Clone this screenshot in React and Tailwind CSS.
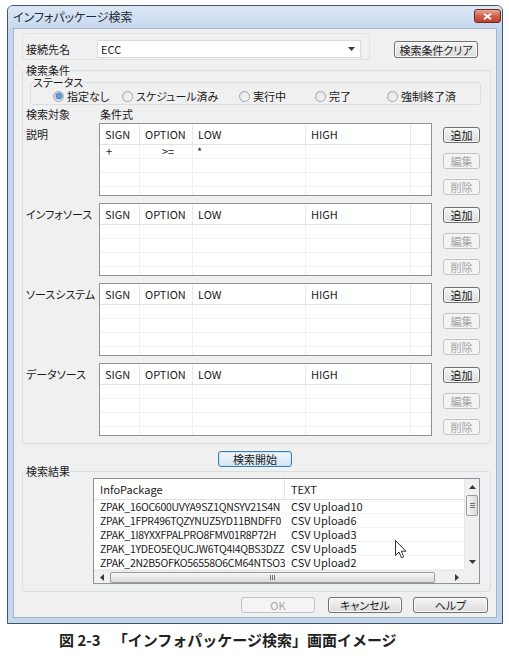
import React from "react";

const UI = "font-['Noto_Sans_CJK_JP','Liberation_Sans',sans-serif] [font-feature-settings:'palt']";

function Btn({ children, w = "w-[37px]", h = "h-[16px]", disabled, focus, className = "" }) {
  let style;
  if (disabled) style = "border-[#c0c4c7] bg-[#f4f4f4] text-[#a6a6a6]";
  else if (focus)
    style =
      "border-[#3c7fb1] bg-linear-to-b from-[#f1f7fc] to-[#d3e4f2] shadow-[inset_0_0_0_1px_#c6e6f8] text-[#1a1a1a]";
  else
    style =
      "border-[#707070] bg-linear-to-b from-[#f5f5f5] to-[#dcdcdc] shadow-[inset_0_0_0_1px_#fbfbfb] text-[#1a1a1a]";
  return (
    <div
      className={`${w} ${h} ${style} ${className} shrink-0 flex items-center justify-center rounded-[3px] border leading-[12px]`}
    >
      {children}
    </div>
  );
}

function Radio({ checked }) {
  return (
    <span className="w-[11px] h-[11px] rounded-full border border-[#a2a2a2] bg-linear-to-br from-[#e2e2e2] to-[#fbfbfb] flex items-center justify-center shrink-0">
      {checked && (
        <span className="w-[6px] h-[6px] rounded-full bg-radial from-[#7fb6ec] to-[#1c5ea8] shadow-[0_0_0_1px_#9cc3e8]" />
      )}
    </span>
  );
}

const COLS = ["w-[40px]", "w-[53px]", "w-[113px]", "w-[105px]", "flex-1"];
const HEAD = ["SIGN", "OPTION", "LOW", "HIGH", ""];

function CondTable({ label, first, rows = [] }) {
  const allRows = [0, 1, 2, 3].map((i) => rows[i] || null);
  return (
    <div className={`flex ${first ? "mt-[2px]" : "mt-[7px]"}`}>
      <div className="w-[76px] pl-[3px] pt-[4px] leading-[14px]">{label}</div>
      <div className="w-[333px] h-[73px] border border-[#8d9199] bg-white flex flex-col overflow-hidden">
        <div className="flex h-[21px] shrink-0 border-b border-[#e3e3e3]">
          {HEAD.map((h, i) => (
            <div
              key={i}
              className={`${COLS[i]} shrink-0 flex items-center pl-[5px] leading-[14px] ${
                i < 4 ? "border-r border-[#e8e8e8]" : ""
              }`}
            >
              {h}
            </div>
          ))}
        </div>
        {allRows.map((r, ri) => (
          <div key={ri} className="flex h-[14px] shrink-0 border-b border-[#f1f1f1]">
            {COLS.map((c, ci) => (
              <div
                key={ci}
                className={`${c} shrink-0 flex items-center leading-[13px] ${
                  ci < 4 ? "border-r border-[#f1f1f1]" : ""
                } ${ci === 0 ? "pl-[6px]" : ci === 1 ? "pl-[22px]" : "pl-[4px]"}`}
              >
                {r ? r[ci] : ""}
              </div>
            ))}
          </div>
        ))}
      </div>
      <div className="ml-[11px] flex flex-col pt-[4px] gap-[10px]">
        <Btn>追加</Btn>
        <Btn disabled>編集</Btn>
        <Btn disabled>削除</Btn>
      </div>
    </div>
  );
}

function Tri({ dir }) {
  const pts = {
    up: "0,4 7,4 3.5,0",
    down: "0,0 7,0 3.5,4",
    left: "4,0 4,7 0,3.5",
    right: "0,0 0,7 4,3.5",
  }[dir];
  const wh = dir === "up" || dir === "down" ? [7, 4] : [4, 7];
  return (
    <svg width={wh[0]} height={wh[1]} viewBox={`0 0 ${wh[0]} ${wh[1]}`}>
      <polygon points={pts} fill="#3a3a3a" />
    </svg>
  );
}

const RESULTS = [
  ["ZPAK_16OC600UVYA9SZ1QNSYV21S4N", "CSV Upload10"],
  ["ZPAK_1FPR496TQZYNUZ5YD11BNDFF0", "CSV Upload6"],
  ["ZPAK_1I8YXXFPALPRO8FMV01R8P72H", "CSV Upload3"],
  ["ZPAK_1YDEO5EQUCJW6TQ4I4QBS3DZZ", "CSV Upload5"],
  ["ZPAK_2N2B5OFKO56558O6CM64NTSO3", "CSV Upload2"],
];

function ResultList() {
  return (
    <div className="ml-[70px] mt-[1px] w-[387px] h-[106px] border border-[#8d9199] bg-white flex flex-col">
      <div className="flex h-[91px]">
        <div className="flex-1 overflow-hidden">
          <div className="flex h-[21px] border-b border-[#e3e3e3]">
            <div className="w-[191px] shrink-0 border-r border-[#e3e3e3] pl-[6px] flex items-center leading-[14px]">
              InfoPackage
            </div>
            <div className="flex-1 pl-[6px] flex items-center leading-[14px]">TEXT</div>
          </div>
          {RESULTS.map((r, i) => (
            <div key={i} className="flex h-[14px] border-b border-[#f4f4f4]">
              <div className="w-[191px] shrink-0 pl-[6px] flex items-center leading-[13px] whitespace-nowrap overflow-hidden text-[10.5px] tracking-[-0.3px]">
                {r[0]}
              </div>
              <div className="flex-1 pl-[6px] flex items-center leading-[13px] whitespace-nowrap">{r[1]}</div>
            </div>
          ))}
        </div>
        <div className="w-[15px] bg-[#f0f0f0] border-l border-[#e6e6e6] flex flex-col items-center">
          <div className="h-[16px] flex items-center justify-center">
            <Tri dir="up" />
          </div>
          <div className="w-[12px] h-[21px] rounded-[2px] border border-[#9b9b9b] bg-linear-to-r from-[#f6f6f6] to-[#dadada] flex flex-col items-center justify-center gap-[1px]">
            <span className="w-[5px] h-px bg-[#707070]" />
            <span className="w-[5px] h-px bg-[#707070]" />
            <span className="w-[5px] h-px bg-[#707070]" />
          </div>
          <div className="flex-1" />
          <div className="h-[16px] flex items-center justify-center">
            <Tri dir="down" />
          </div>
        </div>
      </div>
      <div className="flex h-[13px]">
        <div className="flex-1 bg-[#f0f0f0] border-t border-[#e6e6e6] flex items-center">
          <div className="w-[15px] flex justify-center">
            <Tri dir="left" />
          </div>
          <div className="ml-[1px] w-[325px] h-[11px] rounded-[2px] border border-[#9b9b9b] bg-linear-to-b from-[#f6f6f6] to-[#dadada] flex items-center justify-center gap-[1px]">
            <span className="w-px h-[5px] bg-[#707070]" />
            <span className="w-px h-[5px] bg-[#707070]" />
            <span className="w-px h-[5px] bg-[#707070]" />
          </div>
          <div className="flex-1" />
          <div className="w-[15px] flex justify-center">
            <Tri dir="right" />
          </div>
        </div>
        <div className="w-[15px] bg-[#f0f0f0]" />
      </div>
    </div>
  );
}

export default function App() {
  return (
    <div className={`relative w-[509px] h-[666px] bg-white pt-[5px] pl-[7px] text-[11px] text-[#1a1a1a] ${UI}`}>
      <div className="w-[496px] h-[619px] rounded-t-[6px] border border-[#3f5670] bg-[#c5d7ed] flex flex-col">
        <div className="h-[22px] shrink-0 px-[5px] flex items-center justify-between rounded-t-[5px] bg-linear-to-b from-[#dce7f5] to-[#c8d9ee]">
          <span className="text-[12px] leading-[14px] text-[#1e2a38]">インフォパッケージ検索</span>
          <div className="self-start mt-[3px] -mr-[4px] w-[27px] h-[14px] rounded-[3px] border border-[#6b2a22] bg-linear-to-b from-[#e9a797] via-[#d0604c] to-[#c23f2a] flex items-center justify-center">
            <svg width="9" height="7" viewBox="0 0 9 7">
              <path d="M1 0.8 L8 6.2 M8 0.8 L1 6.2" stroke="#ffffff" strokeWidth="1.8" />
            </svg>
          </div>
        </div>
        <div className="flex-1 px-[5px] pb-[5px] flex">
          <div className="flex-1 bg-[#f0f0f0] border border-[#a4b6cb] flex flex-col">
            {/* connection row */}
            <div className="flex items-start mt-[4px] ml-[8px]">
              <div className="w-[348px] h-[27px] border border-[#dde3e8] rounded-[3px] flex items-end pb-[1px] pl-[3px]">
                <span className="w-[71px] leading-[18px]">接続先名</span>
                <div className="w-[264px] h-[18px] bg-white border border-[#d6d9dd] flex items-center justify-between pl-[3px] pr-[5px]">
                  <span className="leading-[14px]">ECC</span>
                  <Tri dir="down" />
                </div>
              </div>
              <Btn w="w-[84px]" h="h-[17px]" className="ml-[24px] mt-[8px]">
                検索条件クリア
              </Btn>
            </div>

            {/* search conditions */}
            <fieldset className="ml-[8px] mt-[4px] w-[469px] border border-[#d5dfe5] rounded-[3px] pb-[7px] min-w-0">
              <legend className="ml-[3px] leading-[12px]">検索条件</legend>
              <fieldset className="ml-[7px] w-[451px] border border-[#d5dfe5] rounded-[3px] min-w-0">
                <legend className="ml-[2px] leading-[12px]">ステータス</legend>
                <div className="flex items-center h-[16px] pl-[22px] leading-[14px]">
                  {[
                    ["指定なし", "w-[69px]", true],
                    ["スケジュール済み", "w-[117px]", false],
                    ["実行中", "w-[76px]", false],
                    ["完了", "w-[72px]", false],
                    ["強制終了済", "", false],
                  ].map(([t, w, c]) => (
                    <div key={t} className={`${w} flex items-center shrink-0`}>
                      <Radio checked={c} />
                      <span className="ml-[3px]">{t}</span>
                    </div>
                  ))}
                </div>
              </fieldset>
              <div className="flex mt-[2px] leading-[14px]">
                <span className="w-[77px] pl-[3px]">検索対象</span>
                <span>条件式</span>
              </div>
              <CondTable label="説明" first rows={[["+", ">=", "*", "", ""]]} />
              <CondTable label="インフォソース" />
              <CondTable label="ソースシステム" />
              <CondTable label="データソース" />
            </fieldset>

            {/* search start */}
            <div className="h-[14px] mt-[7px] flex justify-center">
              <Btn w="w-[74px]" h="h-[16px]" focus>
                検索開始
              </Btn>
            </div>

            {/* results */}
            <fieldset className="ml-[8px] w-[469px] border border-[#d5dfe5] rounded-[3px] pb-[7px] min-w-0">
              <legend className="ml-[3px] leading-[12px]">検索結果</legend>
              <ResultList />
            </fieldset>

            {/* bottom buttons */}
            <div className="flex justify-end mt-[5px] pr-[8px]">
              <Btn w="w-[74px]" disabled>
                OK
              </Btn>
              <Btn w="w-[74px]" className="ml-[13px]">
                キャンセル
              </Btn>
              <Btn w="w-[75px]" className="ml-[11px]">
                ヘルプ
              </Btn>
            </div>
          </div>
        </div>
      </div>

      <div className="ml-[52px] mt-[8px] text-[15px] font-bold leading-[16px] text-[#222] [font-feature-settings:normal] whitespace-nowrap">
        <span>図 2-3</span>
        <span className="ml-[12px]">「インフォパッケージ検索」画面イメージ</span>
      </div>

      <svg className="absolute left-[395px] top-[540px]" width="12" height="19" viewBox="0 0 12 19">
        <path
          d="M0.5 0.5 L0.5 15.5 L4 12 L6.5 17.8 L8.7 16.8 L6.3 11.2 L11 11.2 Z"
          fill="#ffffff"
          stroke="#333333"
          strokeWidth="1"
          strokeLinejoin="round"
        />
      </svg>
    </div>
  );
}
